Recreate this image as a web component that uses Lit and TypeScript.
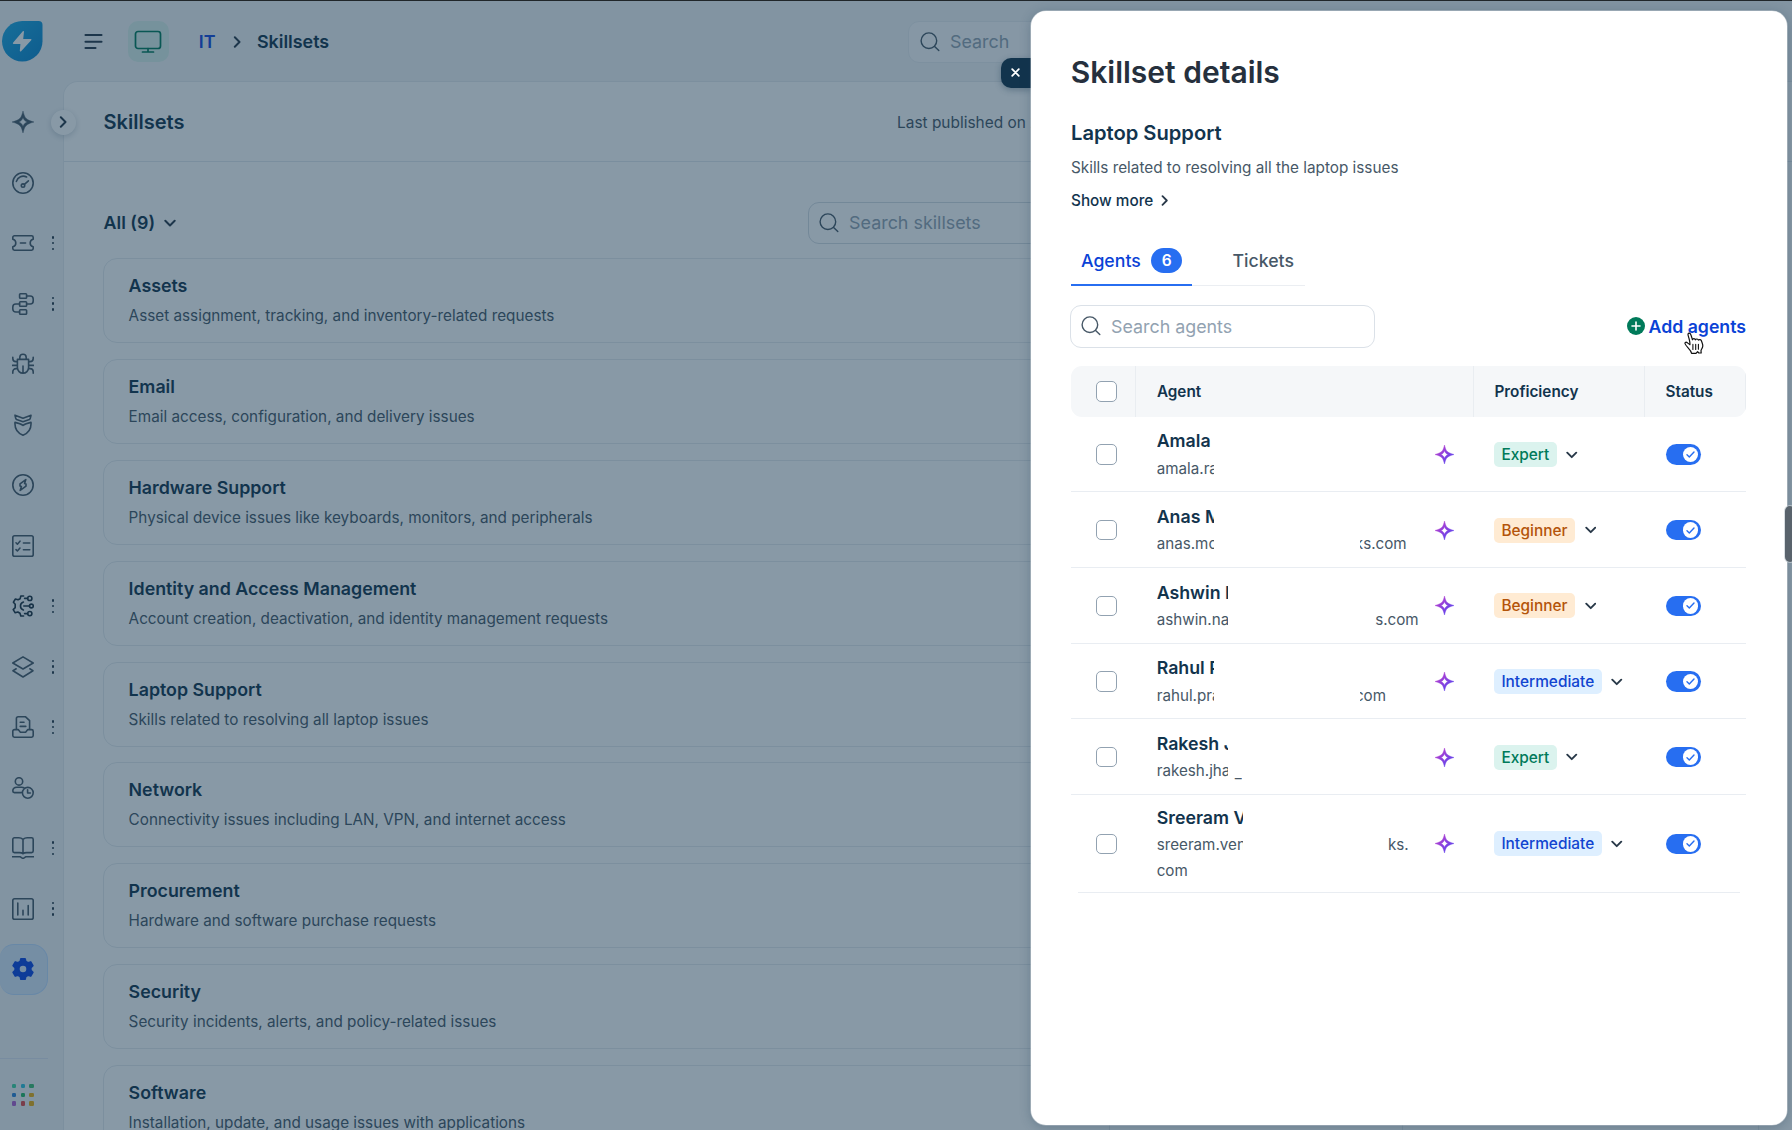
import { LitElement, html, svg, css, nothing } from "lit";
import { customElement, property } from "lit/decorators.js";
import { classMap } from "lit/directives/class-map.js";

const STAR = "M11 0C12.3 5 13.1 6.6 14.4 7.6C15.8 8.9 17.6 9.8 22 11C17.6 12.2 15.8 13.1 14.4 14.4C13.1 15.4 12.3 17 11 22C9.7 17 8.9 15.4 7.6 14.4C6.2 13.1 4.4 12.2 0 11C4.4 9.8 6.2 8.9 7.6 7.6C8.9 6.6 9.7 5 11 0ZM11 6.6C10.4 8.8 8.9 10.3 6.8 11C8.9 11.7 10.4 13.2 11 15.4C11.6 13.2 13.1 11.7 15.2 11C13.1 10.3 11.6 8.8 11 6.6Z";

const GLYPHS: Record<string, unknown> = {
  sparkle: svg`<path d=${STAR} fill="currentColor" stroke="currentColor" stroke-width=".4" fill-rule="evenodd"/>`,
  gauge: svg`<circle cx="11" cy="11" r="10.2"/><path d="M4.4 9.4A7 7 0 0 1 14.6 5"/><circle cx="11" cy="13.6" r="1.7"/><path d="M12.4 12.4L16.4 8.8"/>`,
  ticket: svg`<path d="M2.4 3.8H19.6A1.6 1.6 0 0 1 21.2 5.4V7.2A3.9 3.9 0 0 0 21.2 14.8V16.6A1.6 1.6 0 0 1 19.6 18.2H2.4A1.6 1.6 0 0 1 .8 16.6V14.8A3.9 3.9 0 0 0 .8 7.2V5.4A1.6 1.6 0 0 1 2.4 3.8Z"/><path d="M8.4 11H13.6"/>`,
  flow: svg`<rect x="7.6" y=".8" width="7" height="4.4" rx=".8"/><rect x="7.6" y="8.8" width="7" height="4.4" rx=".8"/><rect x="7.6" y="16.8" width="7" height="4.4" rx=".8"/><path d="M14.6 3H18.2A3 3 0 0 1 21.2 6V8A3 3 0 0 1 18.2 11H14.6M7.6 11H3.8A3 3 0 0 0 .8 14V16A3 3 0 0 0 3.8 19H7.6"/>`,
  bug: svg`<path d="M5.4 6.4H16.6V14.6A5.6 5.6 0 0 1 5.4 14.6ZM7.8 6.2V4.4A3.2 3.2 0 0 1 14.2 4.4V6.2M11 13V20M5.4 8.6H4A3.2 3.2 0 0 1 .8 5.4V4.2M16.6 8.6H18A3.2 3.2 0 0 0 21.2 5.4V4.2M.4 12.4H5.2M16.8 12.4H21.6M5.4 15.6H4A3.2 3.2 0 0 0 .8 18.8V20.2M16.6 15.6H18A3.2 3.2 0 0 1 21.2 18.8V20.2"/>`,
  shield: svg`<path d="M3 1.2C3.2 2.2 3.4 4.6 4.6 5.6L11 7.8L17.4 5.6C18.6 4.6 18.8 2.2 19 1.2L11 4.2ZM3 8.4C6 9 9 9.8 11 11.4C13 9.8 16 9 19 8.4C19.4 14 16.6 19 11 21.2C5.4 19 2.6 14 3 8.4Z"/>`,
  compass: svg`<circle cx="11" cy="11" r="10.2"/><path d="M13.8 5.600L8 9.800V12L9.400 12.400L8.200 16.400L14 12.200V10L12.600 9.600Z"/>`,
  checklist: svg`<rect x=".8" y=".8" width="20.4" height="20.4" rx="1.8"/><path d="M4 7.800L5.400 9.200L8 6.200M11.400 8H17.800M4 14.600L5.400 16L8 13M11.400 14.800H17.800"/>`,
  automation: svg`<path d="M11.6 1H8.800L8.200 3.700L6 4.800L3.400 4L1.400 7.200L3.200 9.200V12.600L1.200 14.600L3.200 17.800L5.800 17L8 18.300L8.800 21H11.600"/><path d="M11.400 7A4.200 4.200 0 0 0 11.400 15"/><path d="M11.800 11H17.400M12.600 3.400H15.600M12.600 18.600H15.600"/><circle cx="17.8" cy="3.400" r="2.1"/><circle cx="19.4" cy="11" r="1.9"/><circle cx="17.8" cy="18.600" r="2.1"/>`,
  layers: svg`<path d="M11 .9L21.200 7L11 13L.8 7ZM4.200 12.800L1 14.800L11 21L21 14.800L17.800 12.800"/>`,
  tray: svg`<path d="M4.400 13.600V2.600A1.800 1.800 0 0 1 6.200 .8H13.600L17.600 4.600V13.600M8.200 6.200H12M8.200 10.400H13.800M2.400 13.600H6.200L8.400 16.200H13.600L15.800 13.600H19.600A1.600 1.600 0 0 1 21.200 15.200V19.600A1.600 1.600 0 0 1 19.600 21.200H2.400A1.600 1.600 0 0 1 .8 19.600V15.200A1.600 1.600 0 0 1 2.400 13.600Z"/>`,
  agentTime: svg`<circle cx="7" cy="4.4" r="3.7"/><path d="M9.400 15.600H2.400A1.600 1.600 0 0 1 .8 14C.8 11.600 2.400 10.200 5 10.200H9.600A5 5 0 0 1 12 10.800"/><circle cx="15.8" cy="15.8" r="5.4"/><path d="M15.600 12.800V16H18.400"/>`,
  book: svg`<path d="M11 2.400C9.600 1.200 8.600 .8 6.800 .8H2.400A1.600 1.600 0 0 0 .8 2.400V14A1.600 1.600 0 0 0 2.400 15.600H7.400C9 15.600 10 15.800 11 16.800C12 15.800 13 15.600 14.600 15.600H19.600A1.600 1.600 0 0 0 21.200 14V2.400A1.600 1.600 0 0 0 19.600 .8H15.200C13.400 .8 12.400 1.200 11 2.400ZM11 2.400V16.400M.4 19.800H8.400L11 21.600L13.600 19.800H21.600"/>`,
  chart: svg`<rect x=".8" y=".8" width="20.4" height="20.4" rx="1.8"/><path d="M5.800 5V17M11 12.200V17M16.200 7.600V17"/>`,
  gear: svg`<path fill="currentColor" stroke="currentColor" stroke-width="1.6" fill-rule="evenodd" d="M8.900 .8H13.100L13.800 3.500L16 4.700L18.700 3.900L20.900 7.600L18.900 9.600V12.400L20.900 14.400L18.700 18.100L16 17.300L13.800 18.500L13.100 21.200H8.900L8.200 18.500L6 17.300L3.300 18.100L1.100 14.400L3.100 12.400V9.600L1.100 7.600L3.300 3.900L6 4.700L8.200 3.500ZM11 6.900A4.100 4.100 0 1 0 11 15.100A4.100 4.100 0 1 0 11 6.900Z"/>`,
};

const glyph = (name: string) =>
  html`<svg class="glyph" width="22" height="22" viewBox="0 0 22 22" fill="none" stroke="currentColor" stroke-width="1.6" stroke-linecap="round" stroke-linejoin="round">${GLYPHS[name]}</svg>`;

const chevron = (dir: "right" | "down", size = 11) =>
  html`<svg class="chev" width=${size} height=${size} viewBox="0 0 11 11" fill="none" stroke="currentColor" stroke-width="1.8" stroke-linecap="round" stroke-linejoin="round"><path d=${dir === "right" ? "M3.500 1.200L7.800 5.500L3.500 9.800" : "M1.200 3.500L5.500 7.800L9.800 3.500"}/></svg>`;

const magnifier = html`<svg width="20" height="20" viewBox="0 0 20 20" fill="none" stroke="#475867" stroke-width="1.4" stroke-linecap="round"><circle cx="8.9" cy="8.7" r="7.8"/><path d="M14.600 14.400L18.800 18.500"/></svg>`;

const NAV: { icon: string; more?: boolean; active?: boolean; dark?: boolean }[] = [
  { icon: "sparkle" },
  { icon: "gauge" },
  { icon: "ticket", more: true },
  { icon: "flow", more: true },
  { icon: "bug" },
  { icon: "shield" },
  { icon: "compass" },
  { icon: "checklist" },
  { icon: "automation", more: true, dark: true },
  { icon: "layers", more: true },
  { icon: "tray", more: true },
  { icon: "agentTime" },
  { icon: "book", more: true },
  { icon: "chart", more: true },
  { icon: "gear", active: true },
];

const APP_DOTS = ["#3fd4a0", "#2fc0dc", "#3fbf72", "#2c83d8", "#25b866", "#edae10", "#b05fd0", "#e2484a", "#edae10"];

const SKILLSETS: [string, string][] = [
  ["Assets", "Asset assignment, tracking, and inventory-related requests"],
  ["Email", "Email access, configuration, and delivery issues"],
  ["Hardware Support", "Physical device issues like keyboards, monitors, and peripherals"],
  ["Identity and Access Management", "Account creation, deactivation, and identity management requests"],
  ["Laptop Support", "Skills related to resolving all laptop issues"],
  ["Network", "Connectivity issues including LAN, VPN, and internet access"],
  ["Procurement", "Hardware and software purchase requests"],
  ["Security", "Security incidents, alerts, and policy-related issues"],
  ["Software", "Installation, update, and usage issues with applications"],
];

interface Agent {
  name: string;
  mail: string;
  /** visible width of the leading part of name and address */
  lead: number;
  tail?: string;
  tailStart?: number;
  tailWidth?: number;
  low?: boolean;
  wrap?: string;
  level: "Expert" | "Beginner" | "Intermediate";
}

const AGENTS: Agent[] = [
  { name: "Amala", mail: "amala.ra", lead: 57, level: "Expert" },
  { name: "Anas M", mail: "anas.mo", lead: 57, tail: "ks.com", tailStart: 203, tailWidth: 47, level: "Beginner" },
  { name: "Ashwin N", mail: "ashwin.na", lead: 71.5, tail: "ks.com", tailStart: 218, tailWidth: 44, level: "Beginner" },
  { name: "Rahul P", mail: "rahul.pra", lead: 57, tail: "com", tailStart: 203, tailWidth: 26.3, level: "Intermediate" },
  { name: "Rakesh J", mail: "rakesh.jha", lead: 71.5, tail: "_", tailStart: 77, tailWidth: 8, low: true, level: "Expert" },
  { name: "Sreeram V", mail: "sreeram.ven", lead: 86, tail: "ks.", tailStart: 230, tailWidth: 22, wrap: "com", level: "Intermediate" },
];

@customElement("side-nav")
class SideNav extends LitElement {
  static styles = css`
    :host { display: flex; flex-direction: column; width: 63px; height: 1129px; color: #475867; }
    .brand { padding: 19.8px 0 0 2.3px; height: 90.9px; box-sizing: border-box; }
    .brand svg { display: block; }
    .item { display: flex; align-items: center; height: 60.5px; }
    .box { display: flex; justify-content: flex-end; align-items: center; width: 48px; height: 51px; box-sizing: border-box; padding-right: 14.5px; }
    .active .box { border: 1px solid #bfdcff; border-left: none; border-radius: 14px 16px 16px 14px; background: #d9e8fb; padding-right: 13.5px; color: #0a44e2; }
    .dark { color: #1d3140; }
    .glyph { display: block; }
    .more { display: flex; flex-direction: column; gap: 3.4px; margin-left: 4.1px; }
    .more i { width: 2.4px; height: 2.4px; border-radius: 50%; background: #283848; }
    .rule { width: 48px; height: 1px; background: #dfe5f2; margin-top: 59px; }
    .apps { display: grid; grid-template-columns: repeat(3, 4.6px); gap: 4.3px; padding: 24.3px 0 0 11.7px; }
    .apps i { height: 4.6px; border-radius: 1.2px; }
  `;
  render() {
    return html`
      <div class="brand">
        <svg width="41" height="41" viewBox="0 0 41 41">
          <defs><linearGradient id="g" x1="0" y1="0" x2="1" y2="1"><stop offset="0" stop-color="#1eaae4"/><stop offset="1" stop-color="#0a84ce"/></linearGradient></defs>
          <path fill="url(#g)" d="M20.250 0H36.500A4 4 0 0 1 40.500 4V20.250A20.250 20.250 0 1 1 20.250 0Z"/>
          <path fill="#fff" d="M20.800 10.200L11 21.800C10.600 22.400 11 23 11.600 23H18.400L17.800 29.800C17.800 30.600 18.600 30.800 19.100 30.200L29.200 19.200C29.700 18.600 29.400 17.900 28.700 17.900H21.200L22 10.800C22.100 10 21.300 9.700 20.800 10.200Z"/>
        </svg>
      </div>
      ${NAV.map(n => html`<div class=${classMap({ item: true, active: !!n.active, dark: !!n.dark })}>
        <div class="box">${glyph(n.icon)}</div>
        ${n.more ? html`<div class="more"><i></i><i></i><i></i></div>` : nothing}
      </div>`)}
      <div class="rule"></div>
      <div class="apps">${APP_DOTS.map(c => html`<i style="background:${c}"></i>`)}</div>
    `;
  }
}

@customElement("skillset-list")
class SkillsetList extends LitElement {
  static styles = css`
    :host { display: flex; flex-direction: column; gap: 15.86px; width: 1656px; }
    .card { display: flex; height: 85px; box-sizing: border-box; border: 1.25px solid #e6ebef; border-radius: 14px; flex: none; }
    .info { width: 1006px; box-sizing: border-box; padding: 14px 0 0 24.3px; border-right: 1px solid #e6ebef; }
    .mid { width: 292px; border-right: 1px solid #e6ebef; }
    h3 { margin: 0; font-size: 17.81px; line-height: 25px; font-weight: 600; color: #12344d; }
    p { margin: 5px 0 0; font-size: 15.29px; line-height: 25px; color: #475867; }
  `;
  render() {
    return SKILLSETS.map(([t, d]) => html`<div class="card"><div class="info"><h3>${t}</h3><p>${d}</p></div><div class="mid"></div></div>`);
  }
}

@customElement("agent-row")
class AgentRow extends LitElement {
  static styles = css`
    :host { display: grid; grid-template-columns: 65px 338px 171px 1fr; align-items: center; min-height: 75.62px; box-sizing: border-box; border-bottom: 1.25px solid #e9edf2; padding-top: 1px; }
    :host([last]) { border-bottom: none; min-height: 97px; }
    .check { width: 20.5px; height: 20.5px; box-sizing: border-box; border: 1.3px solid #92a2b1; border-radius: 5px; background: #fff; margin-left: 25px; }
    .who { display: flex; align-items: center; justify-content: space-between; padding: 0 20.5px 0 20.7px; }
    .name, .mail, .wrap { white-space: nowrap; line-height: 25.2px; }
    .name { overflow: hidden; font-size: 17.75px; font-weight: 600; color: #12344d; margin-bottom: 2.2px; }
    .mail { display: flex; height: 25.2px; font-size: 15.2px; color: #475867; }
    .wrap { font-size: 15.2px; color: #475867; }
    .lead { overflow: hidden; flex: none; }
    .tail { overflow: hidden; display: flex; justify-content: flex-end; flex: none; }
    .tail.low { padding-top: 1.6px; }
    .star { flex: none; display: block; }
    .level { display: flex; align-items: center; gap: 9.6px; padding-left: 20px; color: #283848; }
    .tag { height: 25px; line-height: 25px; padding: 0 7.4px; border-radius: 5px; font-size: 15.42px; font-weight: 500; }
    .Expert { background: #dbf3ee; color: #007a5a; }
    .Beginner { background: #ffebd3; color: #b4540a; }
    .Intermediate { background: #deefff; color: #1144d0; }
    .chev { display: block; }
    .switch { display: flex; align-items: center; justify-content: flex-end; width: 35.5px; height: 20.5px; box-sizing: border-box; padding-right: 2.6px; border-radius: 11px; background: #276ef1; margin-left: 20.5px; }
    .knob { display: flex; align-items: center; justify-content: center; width: 15.5px; height: 15.5px; border-radius: 50%; background: #fff; }
  `;
  @property({ attribute: false }) agent!: Agent;
  render() {
    const a = this.agent;
    return html`
      <div><div class="check"></div></div>
      <div class="who">
        <div>
          <div class="name" style="width:${a.lead}px">${a.name}</div>
          <div class="mail"><span class="lead" style="width:${a.lead}px">${a.mail}</span>${a.tail
            ? html`<span class=${classMap({ tail: true, low: !!a.low })} style="width:${a.tailWidth}px;margin-left:${a.tailStart! - a.lead}px"><span>${a.tail}</span></span>` : nothing}</div>
          ${a.wrap ? html`<div class="wrap">${a.wrap}</div>` : nothing}
        </div>
        <svg class="star" width="19" height="19" viewBox="0 0 22 22"><defs><linearGradient id="v" x1="0" y1="0" x2="1" y2="1"><stop offset=".2" stop-color="#b23fd0"/><stop offset=".85" stop-color="#5a45ee"/></linearGradient></defs><path fill="url(#v)" stroke="url(#v)" stroke-width=".5" fill-rule="evenodd" d=${STAR}/></svg>
      </div>
      <div class="level"><span class="tag ${a.level}">${a.level}</span>${chevron("down", 11.5)}</div>
      <div><div class="switch"><div class="knob"><svg width="9" height="9" viewBox="0 0 9 9" fill="none" stroke="#276ef1" stroke-width="1.4" stroke-linecap="round" stroke-linejoin="round"><path d="M1 4.800L3.300 7L8 2"/></svg></div></div></div>
    `;
  }
}

@customElement("skillset-drawer")
class SkillsetDrawer extends LitElement {
  static styles = css`
    :host { display: flex; flex-direction: column; box-sizing: border-box; width: 756px; height: 1114px; padding: 43px 41px 0 40px; border-radius: 15px; background: #fff; box-shadow: 0 2px 12px rgba(18, 52, 77, .28), 0 0 0 .6px rgba(255, 255, 255, .6); color: #12344d; }
    h1 { margin: 0 0 0 -.3px; font-size: 30px; line-height: 36px; font-weight: 600; color: #26303d; }
    h2 { margin: 29.8px 0 0; font-size: 20.15px; line-height: 25px; font-weight: 600; }
    p { margin: 10.3px 0 0; font-size: 15.3px; line-height: 25px; color: #475867; }
    .show { display: flex; align-items: center; gap: 5.5px; margin-top: 7.9px; font-size: 15.3px; line-height: 25px; font-weight: 500; }
    .show .chev { color: #283848; }
    .tabs { display: flex; margin-top: 22.6px; font-size: 17.7px; font-weight: 500; }
    .tab { display: flex; align-items: center; height: 50.9px; box-sizing: border-box; border-bottom: 1.25px solid #ebeef2; padding-top: .3px; color: #475867; }
    .tab.on { width: 121px; padding-top: 1.5px; padding-left: 10px; gap: 10.6px; border-bottom: 2.5px solid #276ef1; color: #0a42d6; }
    .tab.off { width: 112.5px; padding-left: 40.5px; box-sizing: border-box; }
    .count { width: 30.5px; height: 25px; line-height: 25px; border-radius: 13px; background: #276ef1; color: #fff; text-align: center; font-size: 15.5px; font-weight: 600; }
    .tools { display: flex; align-items: center; justify-content: space-between; margin: 18.5px 0 18.3px -1px; }
    .find { display: flex; align-items: center; gap: 10.2px; width: 304.5px; height: 43px; box-sizing: border-box; border: 1.3px solid #dbe1e8; border-radius: 11px; padding-left: 9.8px; font-size: 17.85px; color: #92a2b1; }
    .add { display: flex; align-items: center; gap: 4px; font-size: 17.7px; font-weight: 600; color: #0a42d6; }
    .head { display: grid; grid-template-columns: 65.4px 337.6px 171px 1fr; height: 50.5px; border-radius: 11px; background: #f5f7f9; font-size: 15.3px; font-weight: 600; overflow: hidden; flex: none; }
    .head div { display: flex; align-items: center; padding-left: 20.5px; box-sizing: border-box; border-right: 1.3px solid #e9edf1; }
    .check { width: 20.5px; height: 20.5px; box-sizing: border-box; border: 1.3px solid #92a2b1; border-radius: 5px; background: #fff; margin-left: 4.5px; }
    .end { height: 1px; background: #e9edf2; margin: 0 6px 0 7px; flex: none; }
  `;
  render() {
    return html`
      <h1>Skillset details</h1>
      <h2>Laptop Support</h2>
      <p>Skills related to resolving all the laptop issues</p>
      <div class="show"><span>Show more</span>${chevron("right")}</div>
      <div class="tabs">
        <div class="tab on"><span>Agents</span><span class="count">6</span></div>
        <div class="tab off">Tickets</div>
      </div>
      <div class="tools">
        <div class="find">${magnifier}<span>Search agents</span></div>
        <div class="add"><svg width="18" height="18" viewBox="0 0 18 18"><circle cx="9" cy="9" r="9" fill="#007a5a"/><path d="M9 5V13M5 9H13" stroke="#fff" stroke-width="1.6" stroke-linecap="round"/></svg><span>Add agents</span></div>
      </div>
      <div class="head"><div><span class="check"></span></div><div>Agent</div><div>Proficiency</div><div>Status</div></div>
      ${AGENTS.map((a, i) => html`<agent-row .agent=${a} ?last=${i === AGENTS.length - 1}></agent-row>`)}
      <div class="end"></div>
    `;
  }
}

@customElement("app-root")
class AppRoot extends LitElement {
  static styles = css`
    :host { display: block; font-family: Inter, "Liberation Sans", sans-serif; }
    .app { position: relative; display: flex; width: 1792px; height: 1130px; box-sizing: border-box; border-top: 1px solid #20262a; background: #f3f5f7; overflow: hidden; color: #12344d; }
    .body { flex: 1; display: flex; flex-direction: column; min-width: 0; }
    header { display: flex; align-items: center; height: 81px; flex: none; padding-left: 20.5px; box-sizing: border-box; margin-bottom: -.6px; }
    .tile { display: flex; align-items: center; justify-content: center; width: 40.5px; height: 40.5px; border-radius: 10px; background: #daf1ea; margin-left: 25.7px; }
    .crumb { display: flex; align-items: center; margin-left: 30.1px; font-size: 17.9px; font-weight: 600; }
    .crumb a { color: #1548de; font-weight: 600; margin-right: 15.2px; }
    .crumb .chev { margin-right: 14.2px; color: #283848; }
    .search { display: flex; align-items: center; gap: 10.2px; height: 42px; box-sizing: border-box; border: 1.25px solid #e9edf1; border-radius: 11px; background: #fafbfc; padding-left: 10.4px; font-size: 17.9px; color: #92a2b1; }
    header .search { width: 420px; margin: 0 463.6px 0 auto; }
    main { flex: 1; border: 1px solid #e6ebef; border-right: none; border-bottom: none; border-radius: 15px 0 0 0; background: #fff; }
    .title { display: flex; align-items: center; height: 79.5px; box-sizing: border-box; border-bottom: 1px solid #e3e8ee; padding: 1.2px 0 0 39.5px; }
    .title h2 { margin: 0; width: 793.5px; font-size: 20.07px; line-height: 25px; font-weight: 600; }
    .title span { font-size: 15.43px; color: #475867; white-space: nowrap; }
    .bar { display: flex; align-items: center; padding: 39.8px 0 14.4px 39.5px; }
    .all { display: flex; align-items: center; gap: 9px; width: 704px; font-size: 17.85px; font-weight: 600; }
    .all .chev { color: #283848; }
    .bar .search { width: 420px; border-color: #d5dce3; background: #fff; }
    skillset-list { margin-left: 39.3px; }
    .expander { position: absolute; left: 50.5px; top: 108.5px; display: flex; align-items: center; justify-content: center; width: 25.5px; height: 25.5px; border-radius: 50%; background: #fff; color: #283848; box-shadow: 0 2px 6px rgba(18, 52, 77, .2); }
    .scrim { position: absolute; inset: 0; background: rgba(18, 52, 77, .5); }
    .close { position: absolute; left: 1000.5px; top: 56.5px; width: 31px; height: 30.5px; display: flex; align-items: center; box-sizing: border-box; padding-left: 10.6px; border-radius: 10px 0 0 10px; background: #12344d; box-shadow: 0 2px 6px rgba(18, 52, 77, .35); }
    skillset-drawer { position: absolute; left: 1031px; top: 10px; }
    .thumb { position: absolute; left: 1784.5px; top: 505px; width: 10px; height: 56px; border-radius: 5px; background: #59636c; box-shadow: 0 0 0 1px rgba(200, 208, 214, .7); }
    .pointer { position: absolute; left: 1684px; top: 330.8px; }
  `;
  render() {
    return html`<div class="app">
      <side-nav></side-nav>
      <div class="body">
        <header>
          <svg width="19" height="18" viewBox="0 0 19 18" stroke="#283848" stroke-width="2.1" stroke-linecap="round"><path d="M1.500 2H17.500M1.500 8.700H17.500M1.500 15H11.500"/></svg>
          <div class="tile"><svg width="28" height="24" viewBox="0 0 28 24" fill="none" stroke="#007a5a" stroke-width="1.7" stroke-linecap="round"><rect x="1.5" y="1.5" width="25" height="17" rx="2.5"/><path d="M14 18.500V22M8.500 22H19.500"/></svg></div>
          <div class="crumb"><a>IT</a>${chevron("right", 12)}<span>Skillsets</span></div>
          <div class="search">${magnifier}<span>Search</span></div>
        </header>
        <main>
          <div class="title"><h2>Skillsets</h2><span>Last published on 2</span></div>
          <div class="bar">
            <div class="all"><span>All (9)</span>${chevron("down", 12)}</div>
            <div class="search">${magnifier}<span>Search skillsets</span></div>
          </div>
          <skillset-list></skillset-list>
        </main>
      </div>
      <div class="expander">${chevron("right", 12)}</div>
      <div class="scrim"></div>
      <div class="close"><svg width="9" height="9" viewBox="0 0 9 9" stroke="#fff" stroke-width="1.8" stroke-linecap="round"><path d="M1.200 1.200L7.800 7.800M7.800 1.200L1.200 7.800"/></svg></div>
      <skillset-drawer></skillset-drawer>
      <svg class="pointer" width="22" height="23" viewBox="0 0 22 23" fill="#fff" stroke="#111" stroke-width="1.2" stroke-linejoin="round" stroke-linecap="round">
        <path d="M7.600 21.400C7.200 19.200 5.600 17.400 3.900 15.600C2.600 14.200 1.400 12.600 1 11.600C.7 10.600 1.700 9.900 2.700 10.400C3.700 10.900 4.600 11.900 5.900 12.600C6.200 11.200 5.600 8.800 5 6.400C4.600 4.800 3.900 3.200 4 2.200C4.100 .9 5.800 .7 6.500 2C7.300 3.600 8 6.200 8.500 7.800C8.700 6.200 11 6.100 11.400 7.800C12 6.600 14 6.800 14.400 8.200C15.300 7.200 17 7.600 17.400 8.800C18.100 11 19.200 12.400 18.700 14.600C18.300 16.400 17.300 17.400 17 18.600L17.200 21H14.800L13.600 19.600L12 21.400Z"/>
        <path fill="none" stroke-width="1.1" d="M8.900 12.400V17.400M11.700 12.200V17.400M14.400 12.200V17.200"/>
      </svg>
      <div class="thumb"></div>
    </div>`;
  }
}
